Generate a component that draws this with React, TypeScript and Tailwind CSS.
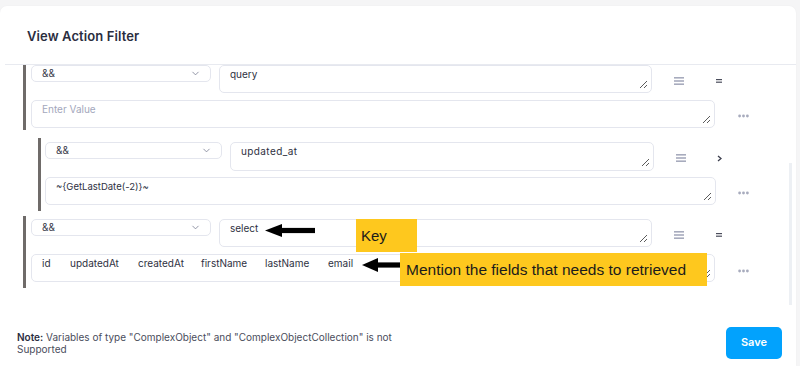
import { ChevronDown } from 'lucide-react';

const Grip = () => (
    <svg width="9" height="9" viewBox="0 0 9 9" className="absolute right-[3px] bottom-[3px]">
        <path d="M8 1 L1 8 M8 5 L5 8" stroke="#5b5b5b" strokeWidth="1" />
    </svg>
);

const Hamburger = () => (
    <svg width="10" height="8" viewBox="0 0 10 8">
        <rect x="0" y="0" width="10" height="1.6" fill="#a7abbd" />
        <rect x="0" y="3.2" width="10" height="1.6" fill="#a7abbd" />
        <rect x="0" y="6.4" width="10" height="1.6" fill="#a7abbd" />
    </svg>
);

const Equals = () => (
    <svg width="6" height="4" viewBox="0 0 6 4">
        <rect x="0" y="0" width="6" height="1.2" fill="#4b4e5c" />
        <rect x="0" y="2.6" width="6" height="1.2" fill="#4b4e5c" />
    </svg>
);

const Greater = () => (
    <svg width="5" height="7" viewBox="0 0 5 7">
        <path d="M1 1 L4 3.5 L1 6" stroke="#3c3f4e" strokeWidth="1.3" fill="none" />
    </svg>
);

const Dots = () => (
    <svg width="11" height="4" viewBox="0 0 11 4">
        <circle cx="1.6" cy="2" r="1.4" fill="#a7abbd" />
        <circle cx="5.5" cy="2" r="1.4" fill="#a7abbd" />
        <circle cx="9.4" cy="2" r="1.4" fill="#a7abbd" />
    </svg>
);

const Select = ({ width }: { width: string }) => (
    <div className={`${width} h-[17px] shrink-0 border border-[#e4e6ee] rounded-[5px] flex items-center justify-between pl-[10px] pr-[9px] text-[10px] text-[#3a3d4c]`}>
        <span>&amp;&amp;</span>
        <ChevronDown className="w-[11px] h-[11px] text-[#7d8195]" strokeWidth={1.8} />
    </div>
);

const Box = ({ width, height = 'h-[28px]', children }: { width: string; height?: string; children?: React.ReactNode }) => (
    <div className={`${width} ${height} shrink-0 relative border border-[#e4e6ee] rounded-[5px] pl-[10px] pt-[1px] text-[10px] text-[#2e3142]`}>
        {children}
        <Grip />
    </div>
);

const LeftArrow = ({ width, height, head }: { width: number; height: number; head: number }) => {
    const mid = height / 2;
    return (
        <svg width={width} height={height} viewBox={`0 0 ${width} ${height}`}>
            <polygon points={`0,${mid} ${head},0 ${head},${height} `} fill="#000" />
            <rect x={head - 1} y={mid - 2.6} width={width - head + 1} height={5.2} fill="#000" />
        </svg>
    );
};

export default function App() {
    return (
        <div className="relative w-[800px] h-[366px] bg-[#f5f5f6] pt-[6px] pr-[4px] font-['Inter','Noto_Sans',sans-serif] overflow-hidden">
            <div className="bg-white rounded-t-[7px] h-[360px] flex flex-col shadow-[0_0_2px_rgba(0,0,0,0.04)]">
                {/* header */}
                <div className="h-[58px] flex items-center pl-[27px] pt-[4px]">
                    <h2 className="text-[13px] font-semibold text-[#2a2d3e] tracking-[0.1px]">View Action Filter</h2>
                </div>
                <div className="ml-[5px] h-px bg-[#e8eaf0]" />

                {/* scroll area */}
                <div className="relative h-[240px] overflow-hidden">
                    {/* group 1 */}
                    <div className="ml-[23px] border-l-[3px] border-[#6f6b69] pl-[5px] pb-[2px] flex flex-col gap-[7px]">
                        <div className="flex items-start">
                            <Select width="w-[180px]" />
                            <div className="ml-[8px]"><Box width="w-[433px]">query</Box></div>
                            <div className="w-[54px] h-[28px] pt-[4px] flex items-center justify-center"><Hamburger /></div>
                            <div className="w-[26px] h-[28px] pt-[4px] flex items-center justify-center"><Equals /></div>
                        </div>
                        <div className="flex items-start">
                            <Box width="w-[684px]"><span className="text-[#a3a7bc]">Enter Value</span></Box>
                            <div className="w-[56px] h-[28px] pt-[3px] flex items-center justify-center"><Dots /></div>
                        </div>
                    </div>

                    {/* group 2 (nested) */}
                    <div className="mt-[8px] ml-[38px] border-l-[3px] border-[#6f6b69] pl-[4px] pt-[4px] pb-[6px] flex flex-col gap-[6px]">
                        <div className="flex items-start">
                            <Select width="w-[177px]" />
                            <div className="ml-[8px]"><Box width="w-[424px]" height="h-[29px]"><span className="tracking-[0.4px]">updated_at</span></Box></div>
                            <div className="w-[54px] h-[29px] pt-[3px] flex items-center justify-center"><Hamburger /></div>
                            <div className="w-[22px] h-[29px] pt-[3px] flex items-center justify-center"><Greater /></div>
                        </div>
                        <div className="flex items-start">
                            <Box width="w-[671px]"><span className="text-[9.5px]">~{'{'}GetLastDate(-2){'}'}~</span></Box>
                            <div className="w-[54px] h-[28px] pt-[3px] flex items-center justify-center"><Dots /></div>
                        </div>
                    </div>

                    {/* group 3 */}
                    <div className="mt-[5px] ml-[23px] border-l-[3px] border-[#6f6b69] pl-[5px] pt-[3px] pb-[6px] flex flex-col gap-[7px]">
                        <div className="flex items-start">
                            <Select width="w-[180px]" />
                            <div className="ml-[8px]"><Box width="w-[433px]">select</Box></div>
                            <div className="w-[54px] h-[28px] pt-[4px] flex items-center justify-center"><Hamburger /></div>
                            <div className="w-[26px] h-[28px] pt-[4px] flex items-center justify-center"><Equals /></div>
                        </div>
                        <div className="flex items-start">
                            <Box width="w-[684px]">
                                <div className="flex">
                                    <span className="w-[28px]">id</span>
                                    <span className="w-[68px]">updatedAt</span>
                                    <span className="w-[63px]">createdAt</span>
                                    <span className="w-[64px]">firstName</span>
                                    <span className="w-[63px]">lastName</span>
                                    <span>email</span>
                                </div>
                            </Box>
                            <div className="w-[56px] h-[28px] pt-[5px] flex items-center justify-center"><Dots /></div>
                        </div>
                    </div>

                    {/* scrollbar */}
                    <div className="absolute right-[4px] top-[98px] w-[3px] h-[144px] bg-[#edf0f4]" />
                </div>

                {/* footer */}
                <div className="flex-1 flex items-center justify-between pl-[17px] pr-[14px] pt-[14px]">
                    <p className="text-[10px] leading-[12px] text-[#4a4d5c]">
                        <span className="font-semibold text-[#2a2d3e]">Note:</span> Variables of type "ComplexObject" and "ComplexObjectCollection" is not
                        <br />
                        Supported
                    </p>
                    <button className="w-[56px] h-[32px] bg-[#02a2fd] rounded-[5px] text-white text-[11px] font-semibold">Save</button>
                </div>
            </div>

            {/* annotations */}
            <div className="absolute left-[265px] top-[224px]"><LeftArrow width={50} height={13} head={17} /></div>
            <div className="absolute left-[356px] top-[219px] w-[61px] h-[33px] bg-[#fec81e] pl-[5px] pt-[6px] font-['Liberation_Sans',sans-serif] text-[15px] text-[#1b1b1b]">Key</div>
            <div className="absolute left-[362px] top-[258px]"><LeftArrow width={40} height={14} head={16} /></div>
            <div className="absolute left-[400px] top-[253px] w-[307px] h-[33px] bg-[#fec81e] pl-[6px] pt-[7px] font-['Liberation_Sans',sans-serif] text-[15.5px] leading-[19px] text-[#1b1b1b] whitespace-nowrap">Mention the fields that needs to retrieved</div>
        </div>
    );
}
